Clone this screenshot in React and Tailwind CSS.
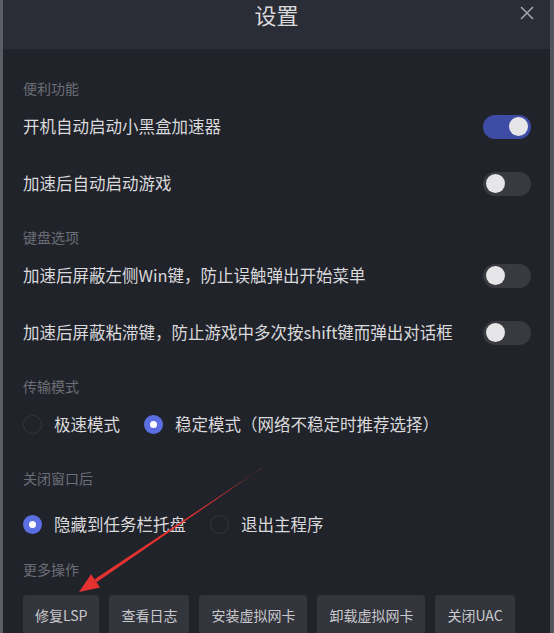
import React from "react";

const font = { fontFamily: '"Noto Sans CJK SC", "Noto Sans", sans-serif' };

function Toggle({ on }) {
  return (
    <div
      className={`relative w-[48px] h-[24px] rounded-full flex items-center px-[3px] ${
        on ? "bg-[#3e4ca6] justify-end" : "bg-[#393a3f] justify-start"
      }`}
    >
      <div className="w-[19px] h-[19px] rounded-full bg-[#e6e6e8]" />
    </div>
  );
}

function Radio({ on }) {
  return on ? (
    <div className="w-[19px] h-[19px] rounded-full bg-[#5b6fe3] flex items-center justify-center shrink-0">
      <div className="w-[7px] h-[7px] rounded-full bg-white" />
    </div>
  ) : (
    <div className="w-[19px] h-[19px] rounded-full border-[1.5px] border-[#34363e] shrink-0" />
  );
}

function Label({ children, className = "" }) {
  return (
    <div className={`h-[20px] flex items-center text-[14px] text-[#6c6e76] ${className}`}>
      {children}
    </div>
  );
}

function ToggleRow({ text, on }) {
  return (
    <div className="h-[57px] flex items-center justify-between">
      <span className="text-[16.5px] text-[#dadadc] whitespace-nowrap">{text}</span>
      <Toggle on={on} />
    </div>
  );
}

function RadioOpt({ on, text }) {
  return (
    <div className="flex items-center gap-[12px]">
      <Radio on={on} />
      <span className="text-[16.5px] text-[#dadadc] whitespace-nowrap">{text}</span>
    </div>
  );
}

export default function App() {
  const buttons = ["修复LSP", "查看日志", "安装虚拟网卡", "卸载虚拟网卡", "关闭UAC"];
  return (
    <div
      style={font}
      className="relative w-[554px] h-[633px] overflow-hidden bg-[#21232b] border-l-[3px] border-l-[#5c5e65] border-r-[4px] border-r-[#52545b]"
    >
      <div className="h-[49px] bg-[#2b2d36] relative flex justify-center">
        <span className="text-[22px] leading-[28px] text-[#d9d9db]">设置</span>
        <svg
          className="absolute right-[15px] top-[5px]"
          width="16"
          height="16"
          viewBox="0 0 16 16"
        >
          <path d="M2 2 L14 14 M14 2 L2 14" stroke="#a0a2a8" strokeWidth="1.6" />
        </svg>
      </div>
      <div className="pl-[20px] pr-[19px] pt-[29px]">
        <Label>便利功能</Label>
        <ToggleRow text="开机自动启动小黑盒加速器" on />
        <ToggleRow text="加速后自动启动游戏" />
        <Label className="mt-[15px]">键盘选项</Label>
        <ToggleRow text="加速后屏蔽左侧Win键，防止误触弹出开始菜单" />
        <ToggleRow text="加速后屏蔽粘滞键，防止游戏中多次按shift键而弹出对话框" />
        <Label className="mt-[15px]">传输模式</Label>
        <div className="h-[57px] flex items-center gap-[24px]">
          <RadioOpt text="极速模式" />
          <RadioOpt on text="稳定模式（网络不稳定时推荐选择）" />
        </div>
        <Label className="mt-[15px]">关闭窗口后</Label>
        <div className="h-[57px] mt-[8px] flex items-center gap-[24px]">
          <RadioOpt on text="隐藏到任务栏托盘" />
          <RadioOpt text="退出主程序" />
        </div>
        <Label className="mt-[6px]">更多操作</Label>
        <div className="mt-[16px] flex gap-[10px]">
          {buttons.map((b) => (
            <div
              key={b}
              className="h-[40px] px-[12px] shrink-0 whitespace-nowrap rounded-[3px] bg-[#33353d] flex items-center text-[14px] text-[#c9c9cc]"
            >
              {b}
            </div>
          ))}
        </div>
      </div>
      <svg
        className="absolute left-[-3px] top-0 pointer-events-none"
        width="554"
        height="633"
        viewBox="0 0 554 633"
      >
        <polygon
          points="262.1,467.8 261.9,468.2 94.6,579.35 96.6,582.25"
          fill="#e53230"
        />
        <polygon points="79,592 100.1,587.4 91.1,574.2" fill="#e53230" />
      </svg>
    </div>
  );
}
